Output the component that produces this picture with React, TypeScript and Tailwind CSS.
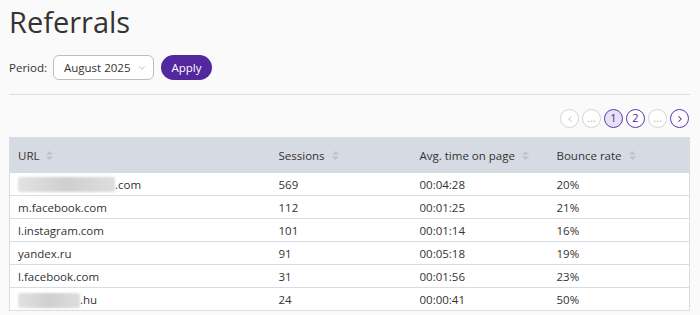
import { ChevronDown, ChevronLeft, ChevronRight } from "lucide-react";

const rows = [
  { url: ".com", blur: 97, sessions: "569", time: "00:04:28", bounce: "20%" },
  { url: "m.facebook.com", sessions: "112", time: "00:01:25", bounce: "21%" },
  { url: "l.instagram.com", sessions: "101", time: "00:01:14", bounce: "16%" },
  { url: "yandex.ru", sessions: "91", time: "00:05:18", bounce: "19%" },
  { url: "l.facebook.com", sessions: "31", time: "00:01:56", bounce: "23%" },
  { url: ".hu", blur: 62, sessions: "24", time: "00:00:41", bounce: "50%" },
];

function SortIcon() {
  return (
    <svg width="9" height="11" viewBox="0 0 9 11" className="ml-1.5 inline-block align-[-1px]">
      <path d="M4.5 1 L8 4.5 H1 Z" fill="#bcc2cb" />
      <path d="M4.5 10 L8 6.5 H1 Z" fill="#bcc2cb" />
    </svg>
  );
}

function PageDot({ children, active, current }: { children: React.ReactNode; active?: boolean; current?: boolean }) {
  return (
    <div
      className={
        "flex h-[19px] w-[19px] items-center justify-center rounded-full border text-[11px] " +
        (current
          ? "border-[#5b34b0] bg-[#e6e1f5] text-[#4a2a96]"
          : active
          ? "border-[#5b34b0] bg-white text-[#4a2a96]"
          : "border-[#d4d4d4] bg-white text-[#b5b5b5]")
      }
    >
      {children}
    </div>
  );
}

export default function App() {
  return (
    <div
      className="h-[315px] w-[700px] overflow-hidden bg-[#fafafa] text-[#333]"
      style={{ fontFamily: '"Open Sans", sans-serif' }}
    >
      <div className="pl-[9px] pr-[10px]">
        <h1 className="pt-[1px] text-[29px] leading-[42px] text-[#333]">Referrals</h1>
        <div className="mt-[12px] flex items-center">
          <span className="text-[11.5px] text-[#333]">Period:</span>
          <div className="ml-[6px] flex h-[25px] w-[101px] items-center rounded-[6px] border border-[#bdbdbd] bg-white pl-[10px] text-[11.5px]">
            August 2025
            <ChevronDown size={10} strokeWidth={1.5} className="ml-[7px] text-[#999]" />
          </div>
          <button className="ml-[7px] h-[25px] w-[51px] rounded-full bg-[#52289f] text-[11.5px] text-white">
            Apply
          </button>
        </div>
        <div className="mt-[14px] h-px bg-[#dcdcdc]" />
        <div className="mt-[14px] flex justify-end gap-[3px] pr-[1px]">
          <PageDot>
            <ChevronLeft size={10} strokeWidth={2} />
          </PageDot>
          <PageDot>…</PageDot>
          <PageDot current>1</PageDot>
          <PageDot active>2</PageDot>
          <PageDot>…</PageDot>
          <PageDot active>
            <ChevronRight size={10} strokeWidth={2.5} />
          </PageDot>
        </div>
        <table className="mt-[9px] w-[681px] border-collapse border border-[#d9dde3] bg-white text-left text-[11.5px]">
          <thead>
            <tr className="h-[35px] bg-[#d6dbe3]">
              <th className="w-[261px] pl-[8px] font-normal">URL<SortIcon /></th>
              <th className="w-[141px] pl-[8px] font-normal">Sessions<SortIcon /></th>
              <th className="w-[137px] pl-[8px] font-normal">Avg. time on page<SortIcon /></th>
              <th className="pl-[8px] font-normal">Bounce rate<SortIcon /></th>
            </tr>
          </thead>
          <tbody>
            {rows.map((r) => (
              <tr key={r.url + r.sessions} className="h-[23px] border-b border-[#d9dde3]">
                <td className="pl-[8px] pt-[2px]">
                  <span className="flex items-center">
                    {r.blur && (
                      <span
                        className="inline-block h-[15px] rounded-[2px] bg-gradient-to-r from-[#e2e2e2] via-[#cfcfcf] to-[#dedede] blur-[1px]"
                        style={{ width: r.blur }}
                      />
                    )}
                    {r.url}
                  </span>
                </td>
                <td className="pl-[8px] pt-[2px]">{r.sessions}</td>
                <td className="pl-[8px] pt-[2px]">{r.time}</td>
                <td className="pl-[8px] pt-[2px]">{r.bounce}</td>
              </tr>
            ))}
          </tbody>
        </table>
      </div>
    </div>
  );
}
